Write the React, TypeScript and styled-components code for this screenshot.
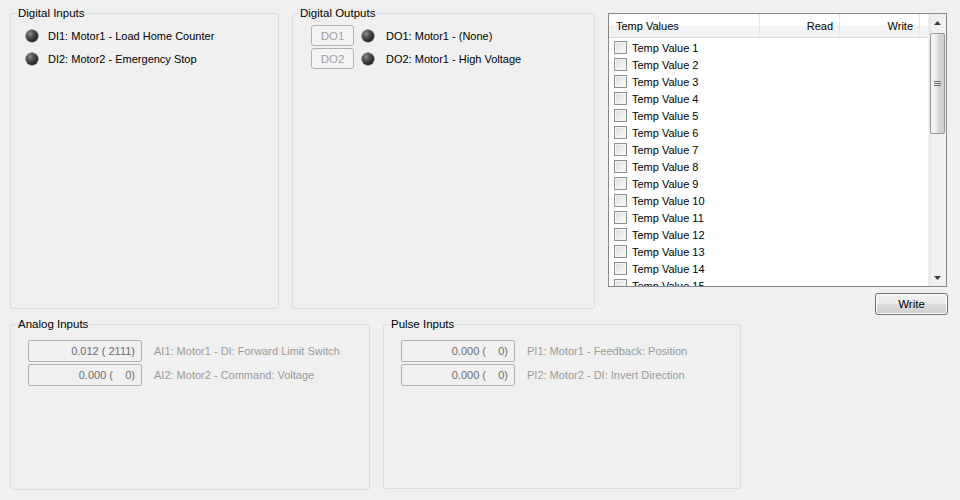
import React from "react";
import styled, { createGlobalStyle } from "styled-components";

const GlobalStyle = createGlobalStyle`
  body {
    margin: 0;
    background: #f0f0f0;
    font-family: "Liberation Sans", Arial, sans-serif;
    font-size: 11px;
    color: #000;
  }
`;

const Window = styled.div`
  width: 960px;
  height: 500px;
  box-sizing: border-box;
  padding: 6px 0 0 10px;
  display: flex;
  flex-direction: column;
  overflow: hidden;
`;

const TopRow = styled.div`
  display: flex;
  align-items: flex-start;
  gap: 13px;
`;

const BottomRow = styled.div`
  display: flex;
  align-items: flex-start;
  gap: 13px;
  margin-top: 2px;
`;

const GroupBox = styled.fieldset<{ $w: number; $h: number }>`
  margin: 0;
  box-sizing: border-box;
  width: ${(p) => p.$w}px;
  height: ${(p) => p.$h}px;
  border: 1px solid #d5dfe5;
  border-radius: 3px;
  padding: 0;
  min-width: 0;
`;

const Legend = styled.legend`
  margin-left: 6px;
  padding: 0 1px;
  line-height: 14px;
  font-size: 11.5px;
  color: #000;
`;

const GroupContent = styled.div<{ $pad: string }>`
  padding: ${(p) => p.$pad};
`;

const Row = styled.div<{ $gap: number }>`
  display: flex;
  align-items: center;
  height: 23px;
  gap: ${(p) => p.$gap}px;
  white-space: nowrap;
`;

const Led = styled.span`
  width: 12px;
  height: 12px;
  border-radius: 50%;
  flex: none;
  background: radial-gradient(circle at 35% 32%, #8a8a8a 0%, #4a4a4a 38%, #1e1e1e 75%, #101010 100%);
  box-shadow: 0 0 0 0.5px #2a2a2a;
`;

const SmallButton = styled.button`
  width: 43px;
  height: 21px;
  box-sizing: border-box;
  border: 1px solid #adb2b5;
  border-radius: 3px;
  background: #f4f4f4;
  color: #a0a0a0;
  font-family: inherit;
  font-size: 11.5px;
  padding: 0;
  margin-right: -4px;
`;

const ListColumn = styled.div`
  display: flex;
  flex-direction: column;
  align-items: flex-end;
  gap: 6px;
  margin-top: 7px;
`;

const ListView = styled.div`
  width: 339px;
  height: 274px;
  box-sizing: border-box;
  border: 1px solid #828790;
  background: #fff;
  display: flex;
  overflow: hidden;
`;

const ListMain = styled.div`
  flex: 1;
  display: flex;
  flex-direction: column;
  min-width: 0;
`;

const Header = styled.div`
  display: flex;
  height: 24px;
  flex: none;
  box-sizing: border-box;
  border-bottom: 1px solid #d5d5d5;
  background: linear-gradient(#ffffff 0%, #ffffff 45%, #f3f4f6 55%, #f1f2f4 100%);
`;

const HeaderCell = styled.div<{ $w: number; $right?: boolean }>`
  width: ${(p) => p.$w}px;
  flex: none;
  box-sizing: border-box;
  border-right: 1px solid #e3e8ee;
  display: flex;
  align-items: center;
  justify-content: ${(p) => (p.$right ? "flex-end" : "flex-start")};
  padding: ${(p) => (p.$right ? "0 6px 0 0" : "0 0 0 7px")};
`;

const Rows = styled.div`
  flex: 1;
  padding-top: 1px;
  overflow: hidden;
`;

const ItemRow = styled.div`
  height: 17px;
  display: flex;
  align-items: center;
  gap: 5px;
  padding-left: 5px;
  white-space: nowrap;
`;

const CheckBox = styled.span`
  width: 13px;
  height: 13px;
  box-sizing: border-box;
  flex: none;
  border: 1px solid #8e8f8f;
  background: linear-gradient(135deg, #dcdcdc 0%, #eeeeee 55%, #ffffff 100%);
  box-shadow: inset 0 0 0 1px #f4f4f4;
`;

const ScrollBar = styled.div`
  width: 17px;
  flex: none;
  display: flex;
  flex-direction: column;
  background: linear-gradient(90deg, #e6e6e6 0%, #f0f0f0 20%, #f0f0f0 100%);
  border-left: 1px solid #f0f0f0;
`;

const ArrowButton = styled.div`
  height: 17px;
  flex: none;
  display: flex;
  align-items: center;
  justify-content: center;
`;

const Thumb = styled.div`
  height: 101px;
  margin: 2px 1px 0 1px;
  box-sizing: border-box;
  border: 1px solid #9a9a9a;
  border-radius: 2px;
  background: linear-gradient(90deg, #f4f4f4 0%, #ececec 45%, #d8d8d8 55%, #cfcfcf 100%);
  display: flex;
  align-items: center;
  justify-content: center;
`;

const Track = styled.div`
  flex: 1;
`;

const Grip = styled.span`
  width: 7px;
  height: 5px;
  background: repeating-linear-gradient(#6e6e6e 0 1px, transparent 1px 2px);
`;

const WriteButton = styled.button`
  width: 73px;
  height: 22px;
  margin-right: -1px;
  box-sizing: border-box;
  border: 1px solid #707070;
  border-radius: 3px;
  background: linear-gradient(#f2f2f2 0%, #ebebeb 50%, #dddddd 51%, #cfcfcf 100%);
  font-family: inherit;
  font-size: 11.5px;
  color: #000;
  padding: 0;
  box-shadow: inset 0 0 0 1px #fcfcfc;
`;

const ValueRow = styled.div`
  display: flex;
  align-items: center;
  gap: 12px;
  height: 22px;
  margin-bottom: 2px;
  white-space: nowrap;
`;

const ValueBox = styled.div`
  width: 114px;
  height: 22px;
  box-sizing: border-box;
  border: 1px solid #adb2b5;
  border-radius: 2px;
  background: #f0f0f0;
  color: #6d6d6d;
  display: flex;
  align-items: center;
  justify-content: flex-end;
  padding-right: 6px;
  white-space: pre;
`;

const DimLabel = styled.span`
  color: #9a9a9a;
`;

const digitalInputs = ["DI1: Motor1 - Load Home Counter", "DI2: Motor2 - Emergency Stop"];
const digitalOutputs = [
  { btn: "DO1", label: "DO1: Motor1 - (None)" },
  { btn: "DO2", label: "DO2: Motor1 - High Voltage" },
];
const analogInputs = [
  { value: "0.012 ( 2111)", label: "AI1: Motor1 - DI: Forward Limit Switch" },
  { value: "0.000 (    0)", label: "AI2: Motor2 - Command: Voltage" },
];
const pulseInputs = [
  { value: "0.000 (    0)", label: "PI1: Motor1 - Feedback: Position" },
  { value: "0.000 (    0)", label: "PI2: Motor2 - DI: Invert Direction" },
];
const tempValues = Array.from({ length: 15 }, (_, i) => `Temp Value ${i + 1}`);

function Arrow({ down }: { down?: boolean }) {
  return (
    <svg width="7" height="4" viewBox="0 0 7 4">
      <path d={down ? "M0 0 H7 L3.5 4 Z" : "M0 4 H7 L3.5 0 Z"} fill="#3c3c3c" />
    </svg>
  );
}

export default function App() {
  return (
    <>
      <GlobalStyle />
      <Window>
        <TopRow>
          <GroupBox $w={269} $h={303}>
            <Legend>Digital Inputs</Legend>
            <GroupContent $pad="4px 0 0 15px">
              {digitalInputs.map((t) => (
                <Row key={t} $gap={10}>
                  <Led />
                  <span>{t}</span>
                </Row>
              ))}
            </GroupContent>
          </GroupBox>
          <GroupBox $w={303} $h={303}>
            <Legend>Digital Outputs</Legend>
            <GroupContent $pad="4px 0 0 18px">
              {digitalOutputs.map((d) => (
                <Row key={d.btn} $gap={12}>
                  <SmallButton disabled>{d.btn}</SmallButton>
                  <Led />
                  <span>{d.label}</span>
                </Row>
              ))}
            </GroupContent>
          </GroupBox>
          <ListColumn>
            <ListView>
              <ListMain>
                <Header>
                  <HeaderCell $w={151}>Temp Values</HeaderCell>
                  <HeaderCell $w={80} $right>
                    Read
                  </HeaderCell>
                  <HeaderCell $w={80} $right>
                    Write
                  </HeaderCell>
                </Header>
                <Rows>
                  {tempValues.map((t) => (
                    <ItemRow key={t}>
                      <CheckBox />
                      <span>{t}</span>
                    </ItemRow>
                  ))}
                </Rows>
              </ListMain>
              <ScrollBar>
                <ArrowButton>
                  <Arrow />
                </ArrowButton>
                <Thumb>
                  <Grip />
                </Thumb>
                <Track />
                <ArrowButton>
                  <Arrow down />
                </ArrowButton>
              </ScrollBar>
            </ListView>
            <WriteButton>Write</WriteButton>
          </ListColumn>
        </TopRow>
        <BottomRow>
          <GroupBox $w={360} $h={173}>
            <Legend>Analog Inputs</Legend>
            <GroupContent $pad="9px 0 0 17px">
              {analogInputs.map((a) => (
                <ValueRow key={a.label}>
                  <ValueBox>{a.value}</ValueBox>
                  <DimLabel>{a.label}</DimLabel>
                </ValueRow>
              ))}
            </GroupContent>
          </GroupBox>
          <GroupBox $w={358} $h={172}>
            <Legend>Pulse Inputs</Legend>
            <GroupContent $pad="9px 0 0 17px">
              {pulseInputs.map((a) => (
                <ValueRow key={a.label}>
                  <ValueBox>{a.value}</ValueBox>
                  <DimLabel>{a.label}</DimLabel>
                </ValueRow>
              ))}
            </GroupContent>
          </GroupBox>
        </BottomRow>
      </Window>
    </>
  );
}
